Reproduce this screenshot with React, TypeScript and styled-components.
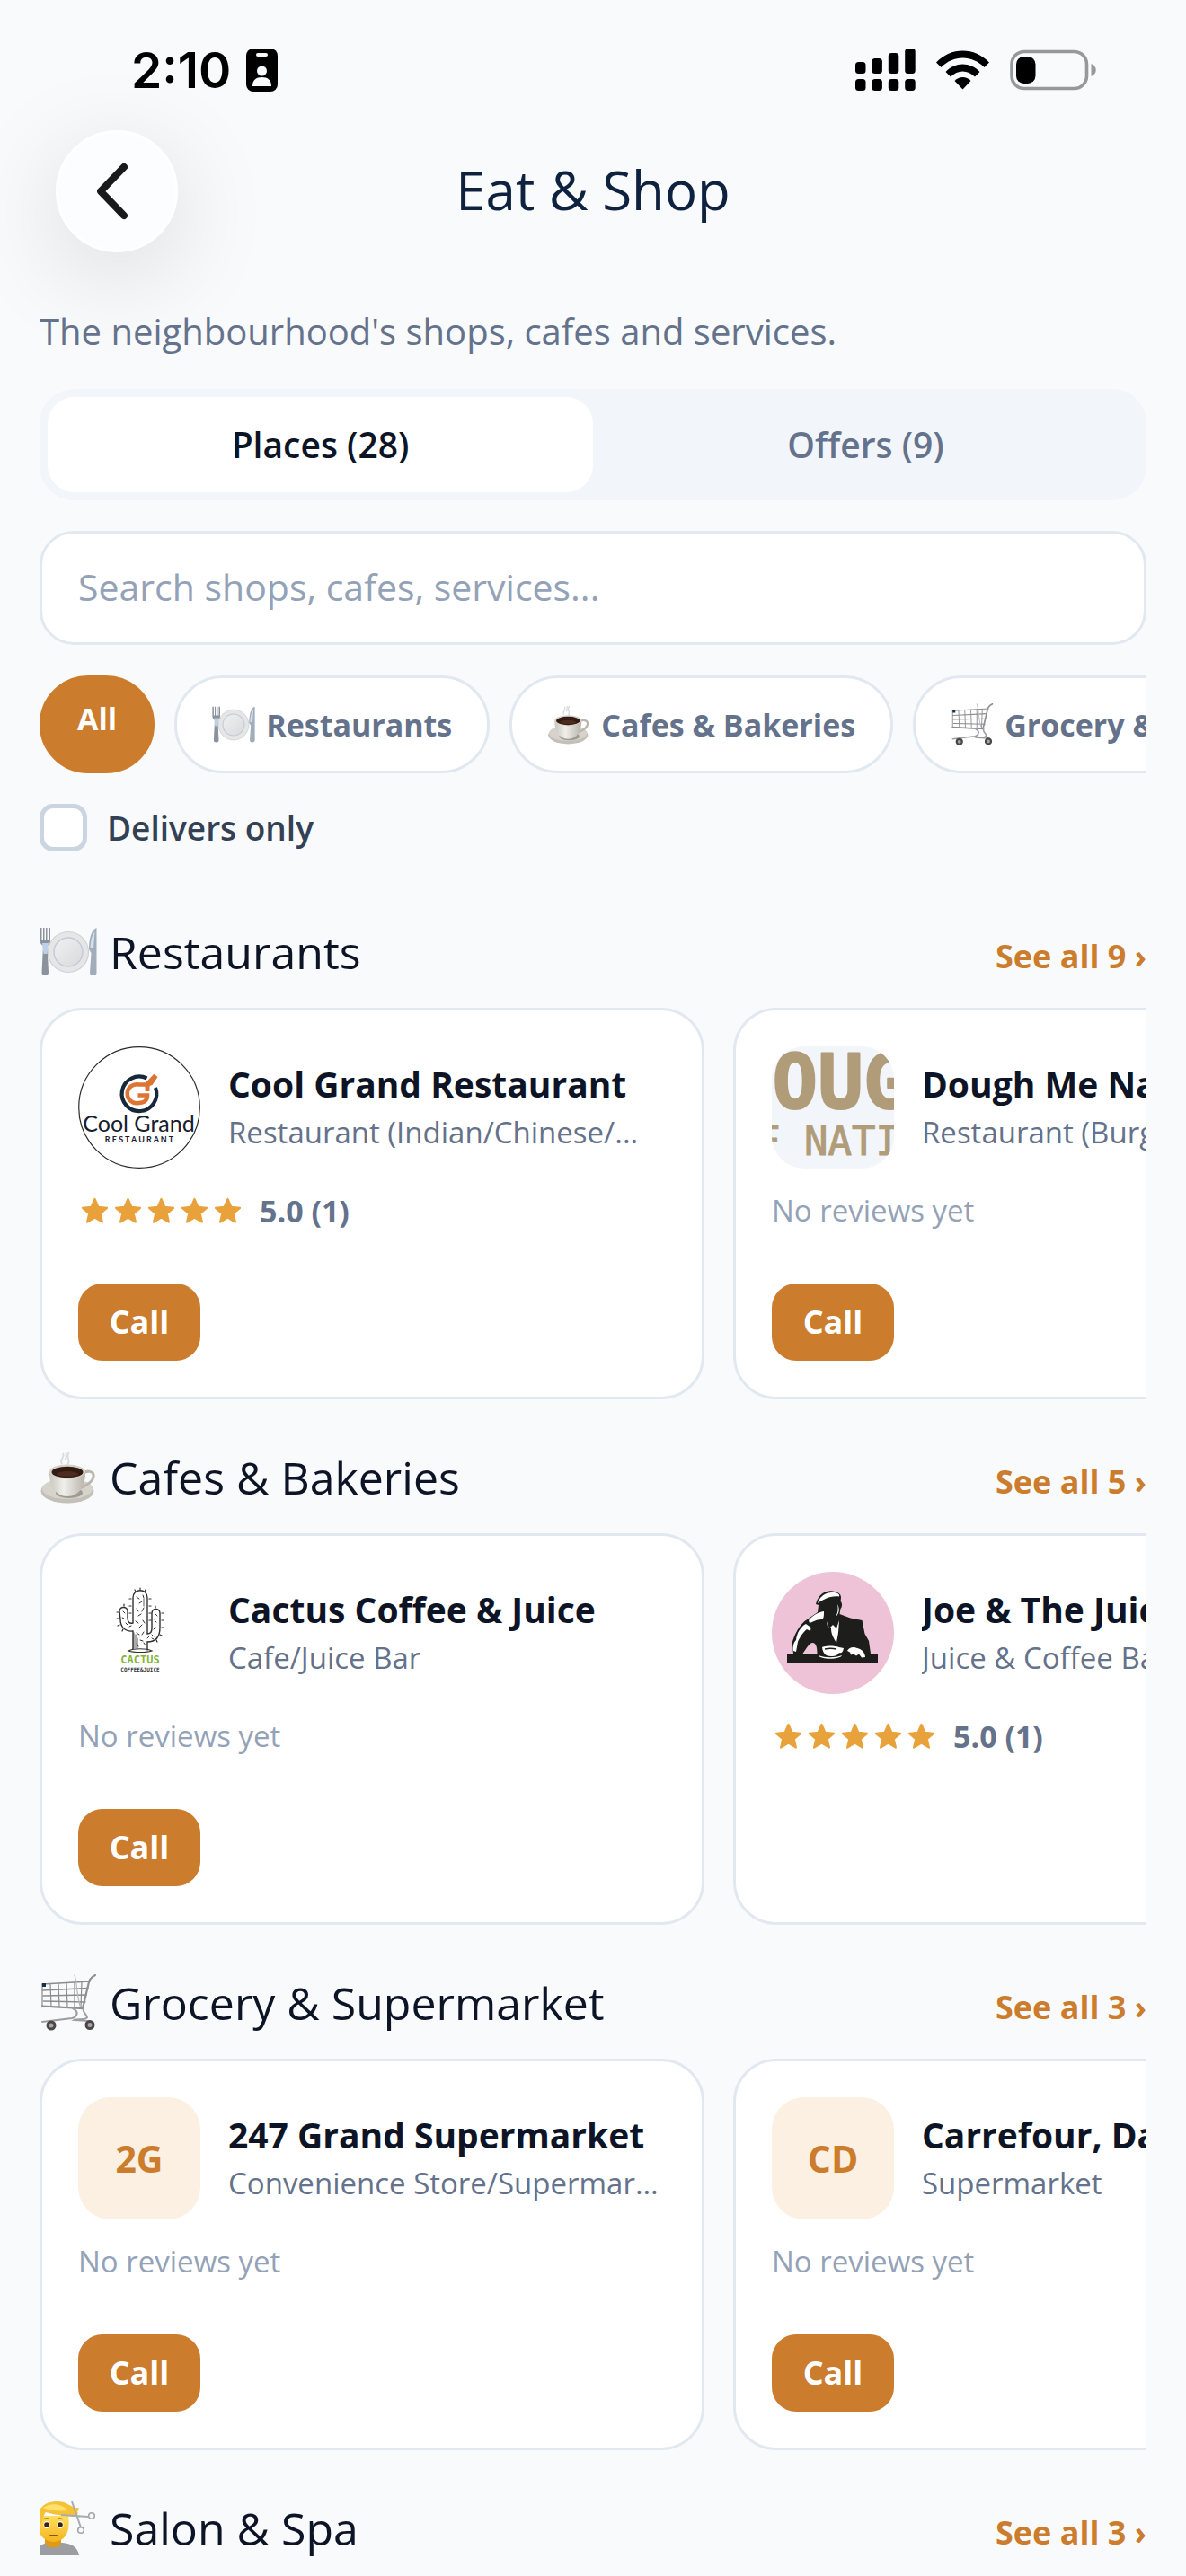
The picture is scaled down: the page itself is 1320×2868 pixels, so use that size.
import React, { useId, useState } from "react";
import styled, { createGlobalStyle } from "styled-components";

const color = {
  page: "#f9fafc",
  ink: "#0d1426",
  navy: "#0e2240",
  slate: "#64728b",
  muted: "#94a2b8",
  line: "#e2e8f0",
  track: "#f2f5fa",
  accent: "#cb7c2c",
  tint: "#fbf0e1",
  star: "#e9a23b",
  label: "#334155",
};

const GlobalStyle = createGlobalStyle`
  *, *::before, *::after { box-sizing: border-box; }
  body {
    margin: 0;
    background: ${color.page};
    font-family: "Open Sans", "Noto Sans", sans-serif;
    color: ${color.ink};
  }
  h1, h2, h3, p { margin: 0; }
  button, input { font-family: inherit; }
`;

const Screen = styled.div`
  height: 100vh;
  overflow: hidden;
  display: flex;
  flex-direction: column;
  background: ${color.page};
`;

const StatusBar = styled.div`
  flex: none;
  height: 145px;
  padding: 11px 100px 0 146px;
  display: flex;
  justify-content: space-between;
  align-items: center;
`;

const StatusGroup = styled.div<{ $gap: number }>`
  display: flex;
  align-items: center;
  gap: ${(p) => p.$gap}px;
`;

const Clock = styled.span`
  font-family: Inter, sans-serif;
  font-size: 55px;
  line-height: 64px;
  font-weight: 600;
  color: #000;
`;

const NavBar = styled.header`
  flex: none;
  display: grid;
  grid-template-columns: 136px 1fr 136px;
  align-items: center;
  padding: 0 62px;
`;

const BackButton = styled.button`
  width: 136px;
  height: 136px;
  padding: 0;
  border: 3px solid #fff;
  border-radius: 50%;
  background: #fcfdfe;
  box-shadow: 0 24px 110px rgba(0, 0, 0, 0.13);
  display: grid;
  place-items: center;
`;

const Title = styled.h1`
  padding-bottom: 5px;
  text-align: center;
  font-size: 60px;
  line-height: 80px;
  font-weight: 400;
  color: ${color.navy};
`;

const Content = styled.main`
  padding: 59px 44px 0;
  display: flex;
  flex-direction: column;
`;

const Intro = styled.p`
  font-size: 40px;
  line-height: 57px;
  color: ${color.slate};
`;

const Filters = styled.div`
  margin-top: 36px;
  display: flex;
  flex-direction: column;
  gap: 34px;
`;

const Tabs = styled.div`
  display: grid;
  grid-template-columns: 1fr 1fr;
  padding: 9px;
  border-radius: 38px;
  background: ${color.track};
`;

const Tab = styled.button<{ $active: boolean }>`
  height: 106px;
  border: 0;
  border-radius: 30px;
  background: ${(p) => (p.$active ? "#fff" : "transparent")};
  color: ${(p) => (p.$active ? color.ink : color.slate)};
  font-size: 39px;
  line-height: 54px;
  font-weight: 600;
`;

const Search = styled.input`
  width: 100%;
  height: 127px;
  padding: 0 40px 3px;
  border: 3px solid ${color.line};
  border-radius: 38px;
  background: #fff;
  font-size: 41px;
  color: ${color.ink};
  outline: none;
  &::placeholder {
    color: ${color.muted};
    opacity: 1;
  }
`;

const ChipRow = styled.div`
  display: flex;
  gap: 22px;
  overflow: hidden;
`;

const Chip = styled.button<{ $active: boolean }>`
  flex: none;
  height: 109px;
  padding: 20px 39px;
  border: 3px solid ${(p) => (p.$active ? color.accent : color.line)};
  border-radius: 54px;
  background: ${(p) => (p.$active ? color.accent : "#fff")};
  color: ${(p) => (p.$active ? "#fff" : color.slate)};
  display: flex;
  align-items: ${(p) => (p.$active ? "flex-start" : "center")};
  gap: 12px;
  font-size: 34px;
  line-height: 50px;
  font-weight: 700;
  white-space: nowrap;
`;

const CheckRow = styled.label`
  display: flex;
  align-items: center;
  gap: 22px;
  font-size: 37px;
  line-height: 53px;
  font-weight: 600;
  color: ${color.label};
`;

const Checkbox = styled.input`
  appearance: none;
  width: 53px;
  height: 53px;
  margin: 0;
  border: 5px solid #cbd5e1;
  border-radius: 15px;
  background: #fff;
  &:checked {
    background: ${color.accent};
    border-color: ${color.accent};
  }
`;

const Sections = styled.div`
  margin-top: 80px;
  display: flex;
  flex-direction: column;
  gap: 55px;
`;

const Section = styled.section`
  display: flex;
  flex-direction: column;
  gap: 30px;
`;

const SectionHead = styled.div`
  display: flex;
  justify-content: space-between;
  align-items: flex-end;
`;

const SectionTitle = styled.h2`
  display: flex;
  align-items: center;
  gap: 14px;
  font-size: 50px;
  line-height: 64px;
  font-weight: 400;
`;

const SeeAll = styled.a`
  color: ${color.accent};
  font-size: 36px;
  line-height: 54px;
  font-weight: 700;
  text-decoration: none;
`;

const CardRow = styled.div`
  display: flex;
  gap: 32px;
  overflow: hidden;
`;

const Card = styled.article`
  flex: none;
  width: 740px;
  padding: 40px;
  border: 3px solid ${color.line};
  border-radius: 48px;
  background: #fff;
  display: flex;
  flex-direction: column;
  align-items: flex-start;
`;

const CardTop = styled.div`
  width: 100%;
  display: flex;
  align-items: center;
  gap: 31px;
`;

const CardText = styled.div`
  min-width: 0;
  flex: 1;
  padding-bottom: 3px;
`;

const CardName = styled.h3`
  font-size: 39px;
  line-height: 57px;
  font-weight: 700;
  overflow: hidden;
  white-space: nowrap;
  text-overflow: ellipsis;
`;

const CardKind = styled.p`
  font-size: 33px;
  line-height: 51px;
  color: ${color.slate};
  overflow: hidden;
  white-space: nowrap;
  text-overflow: ellipsis;
`;

const Avatar = styled.div<{ $bg: string }>`
  flex: none;
  width: 136px;
  height: 136px;
  border-radius: 36px;
  overflow: hidden;
  background: ${(p) => p.$bg};
  color: ${color.accent};
  font-size: 41px;
  line-height: 57px;
  font-weight: 700;
  display: grid;
  place-items: center;
`;

const Review = styled.div<{ $rated: boolean }>`
  margin-top: 26px;
  height: 42px;
  display: flex;
  align-items: center;
  gap: ${(p) => (p.$rated ? 17 : 0)}px;
  font-size: ${(p) => (p.$rated ? 34 : 33)}px;
  line-height: 42px;
  font-weight: ${(p) => (p.$rated ? 700 : 400)};
  color: ${(p) => (p.$rated ? color.slate : color.muted)};
`;

const Stars = styled.span`
  display: flex;
`;

const CallButton = styled.button`
  margin-top: 60px;
  width: 136px;
  height: 86px;
  padding: 0;
  border: 0;
  border-radius: 27px;
  background: ${color.accent};
  color: #fff;
  font-size: 36px;
  line-height: 50px;
  font-weight: 700;
`;

/* ---------- status icons ---------- */

const BadgeIcon = () => (
  <svg width="35" height="48" viewBox="0 0 35 48" aria-hidden="true">
    <rect width="35" height="48" rx="8" fill="#000" />
    <rect x="11" y="5" width="13" height="4" rx="2" fill={color.page} />
    <circle cx="17.500" cy="25" r="5.500" fill={color.page} />
    <path d="M7 42c0-7 4-10 10.500-10S28 35 28 42z" fill={color.page} />
  </svg>
);

const SignalIcon = () => (
  <svg width="67" height="48" viewBox="0 0 67 48" aria-hidden="true">
    {[15, 11, 5, 0].map((top, i) => (
      <g key={i}>
        <rect x={i * 18.4} y={top} width="11.500" height={28 - top} rx="3.500" />
        <rect x={i * 18.4} y="34" width="11.500" height="13" rx="3.500" />
      </g>
    ))}
  </svg>
);

const WifiIcon = () => (
  <svg width="59" height="44" viewBox="0 0 59 44" aria-hidden="true">
    <path d="M0 13.500C16-4 43-4 59 13.500L53.500 19C40 5 19 5 5.500 19Z" />
    <path d="M10.500 24C21 12.500 38 12.500 48.500 24L43 29.500C35 21.500 24 21.500 16 29.500Z" />
    <path d="M20.500 34C25.500 28.500 33.500 28.500 38.500 34L29.500 43.500Z" />
  </svg>
);

const BatteryIcon = () => (
  <svg width="96" height="46" viewBox="0 0 96 46" aria-hidden="true">
    <rect x="2" y="2.500" width="83.500" height="41" rx="14" fill="none" stroke="#97989a" strokeWidth="3.600" />
    <rect x="7" y="8" width="21.500" height="30" rx="8.500" />
    <path d="M90.500 16c7 2.500 7 11.500 0 14z" fill="#97989a" />
  </svg>
);

const ChevronIcon = () => (
  <svg width="44" height="64" viewBox="0 0 44 64" aria-hidden="true">
    <path d="M30 5 4 32 30 59" fill="none" stroke="#1a1a1a" strokeWidth="8" strokeLinecap="round" strokeLinejoin="round" />
  </svg>
);

const StarIcon = () => (
  <svg width="37" height="30" viewBox="0 0 37 30" aria-hidden="true">
    <path
      d="M18.500 2 22.400 10.900 32 11.800 24.700 18.100 26.900 27.600 18.500 22.600 10.100 27.600 12.300 18.100 5 11.800 14.600 10.900Z"
      fill={color.star}
      stroke={color.star}
      strokeWidth="2.200"
      strokeLinejoin="round"
    />
  </svg>
);

/* ---------- category pictures ---------- */

type Category = "plate" | "coffee" | "cart" | "haircut";

const Plate = ({ id }: { id: string }) => (
  <>
    <defs>
      <linearGradient id={id} x1="0" y1="0" x2="1" y2="1">
        <stop offset="0" stopColor="#f0f1f3" />
        <stop offset="1" stopColor="#d9d9da" />
      </linearGradient>
    </defs>
    <circle cx="32" cy="32" r="22.500" fill="#e6e6e7" stroke="#cfd1d5" strokeWidth="1.200" />
    <circle cx="32" cy="32" r="16" fill={`url(#${id})`} stroke="#c0cad8" strokeWidth="1.400" />
    <path d="M.500 5v14c0 3 1.500 5 3.500 6L2.500 55c0 4 7.500 4 7.500 0L8.500 25c2-1 3.500-3 3.500-6V5H10v13H8.500V5H7v13H5.500V5H4v13H2.500V5Z" fill="#8b929c" />
    <path d="M3 22h7l-1.500 12h-4Z" fill="#bcd0e8" />
    <path d="M63.500 5c-6 2-8.500 13-8.500 24l2.500 4-1.500 22c0 4 7.500 4 7.500 0Z" fill="#a1adbb" />
    <path d="M61.500 9c-3 4-5 11-5 19h3.500Z" fill="#d3e0ee" />
  </>
);

const Coffee = ({ id }: { id: string }) => (
  <>
    <defs>
      <linearGradient id={id} x1="0" y1="0" x2="1" y2="0">
        <stop offset="0" stopColor="#c9c6bf" />
        <stop offset="0.400" stopColor="#f1efea" />
        <stop offset="1" stopColor="#b7b3ab" />
      </linearGradient>
    </defs>
    <ellipse cx="31" cy="47" rx="29.500" ry="13.500" fill="#c3c0b8" />
    <ellipse cx="31" cy="44.500" rx="28" ry="11.500" fill="#d6d3cc" />
    <ellipse cx="33" cy="49" rx="15" ry="6" fill="#9f9b92" />
    <path d="M47 28c6-5 14-3 13 3-1 7-8 9-15 13" fill="none" stroke="#bbb7ae" strokeWidth="3" />
    <path d="M11 26c0 14 6 27 20 27s20-13 20-27Z" fill={`url(#${id})`} />
    <ellipse cx="31" cy="25.500" rx="20" ry="8" fill="#d5d1c9" />
    <ellipse cx="31" cy="26" rx="17.500" ry="6.200" fill="#331b11" />
    <ellipse cx="31" cy="28" rx="12" ry="3" fill="#4c2c1e" />
    <path d="M25 17c-4-6 4-6 1-12M31 18c5-6-3-8 2-14M28 12c4-2 0-5 2-8" fill="none" stroke="#d9dbdd" strokeWidth="1.800" />
  </>
);

const Cart = () => (
  <g fill="none" strokeLinecap="round">
    <path d="M3 11 56 8M3.500 18 54 15.500M4 24 52 23M4.500 30 51 31M5 36 49 37.500" stroke="#8b8c8e" strokeWidth="1.500" />
    <path d="M3 11v25M12 11l1 25M21 10l1 26M30 10l1 26M39 9v28M47 9l-1 28" stroke="#8b8c8e" strokeWidth="1.200" />
    <path d="M39 1c3 9 2 20 6 34" stroke="#b6b7b9" strokeWidth="1.200" />
    <path d="M62 1c-6 3-7 6-8 12L48 38 3 35.500" stroke="#8e8f91" strokeWidth="2.200" />
    <path d="M37 38c8 4 4 10-1 11L3 53M49 38c-2 4 4 7 4 10-2 4-10 1-14 3L56 52" stroke="#9c9da0" strokeWidth="2" />
    <circle cx="13" cy="57" r="4" stroke="#4c4747" strokeWidth="3" fill="#a9a5a4" />
    <circle cx="56" cy="56.500" r="4" stroke="#4c4747" strokeWidth="3" fill="#a9a5a4" />
    <path d="M3 12h4" stroke="#17324c" strokeWidth="4" strokeLinecap="butt" />
  </g>
);

const Haircut = ({ id }: { id: string }) => (
  <>
    <defs>
      <linearGradient id={id} x1="0" y1="0" x2="0" y2="1">
        <stop offset="0" stopColor="#ffdf5e" />
        <stop offset="1" stopColor="#f3b51f" />
      </linearGradient>
    </defs>
    <path d="M0 62V52c5-4 9-4 15-4 16-1 27 2 29 14Z" fill="#9c9da0" />
    <path d="M6 42h18v7c-4 6-14 6-18 0Z" fill="#dd9a18" />
    <path d="M0 18h32c2 12 0 28-16 29C8 47 2 42 0 37Z" fill={`url(#${id})`} />
    <path d="M0 12C4 3 16 0 27 3c6 2 11 7 17 6l-2 5 1 1c-3 4-8 4-11 3-8 0-18-2-25-4-3 3-3 11-7 14Z" fill="#f5c235" />
    <path d="M4 9C12 3 24 4 32 12 22 13 10 12 4 9Z" fill="#ffe06e" />
    <ellipse cx="8" cy="28" rx="3.500" ry="4" fill="#fff" />
    <ellipse cx="23" cy="28" rx="3.500" ry="4" fill="#fff" />
    <circle cx="8" cy="28" r="2.800" fill="#3a2414" />
    <circle cx="23" cy="28" r="2.800" fill="#3a2414" />
    <path d="M12 40h7" fill="none" stroke="#8d4f13" strokeWidth="2" strokeLinecap="round" />
    <path d="M4 22q3-2 6-1M20 21q3-1 6 1" fill="none" stroke="#c58a1a" strokeWidth="1.400" />
    <path d="M24 17 54 19M36 2 46 31" stroke="#a9abb0" strokeWidth="2" />
    <circle cx="58" cy="18" r="3.300" fill="none" stroke="#a3a4a8" strokeWidth="1.600" />
    <circle cx="46" cy="34" r="3.300" fill="none" stroke="#a3a4a8" strokeWidth="1.600" />
  </>
);

const pictures = { plate: Plate, coffee: Coffee, cart: Cart, haircut: Haircut };

const CategoryIcon = ({ kind, size }: { kind: Category; size: number }) => {
  const id = useId();
  const Picture = pictures[kind];
  return (
    <svg width={size} height={size} viewBox="0 0 64 64" aria-hidden="true">
      <Picture id={id} />
    </svg>
  );
};

/* ---------- shop logos ---------- */

const CoolGrandLogo = () => (
  <svg width="136" height="136" viewBox="0 0 136 136" role="img" aria-label="Cool Grand logo">
    <circle cx="68" cy="68" r="67.300" fill="#fff" stroke="#2a2a2a" strokeWidth="1.200" />
    <path d="M76.500 35.500A19.300 19.300 0 1 0 86 46" fill="none" stroke="#16283a" strokeWidth="4.200" />
    <path d="M86.500 32.500 78 42.500H67.500a10.500 10.500 0 1 0 0 20.500c6 0 9.500-3 9.500-8.500H66.500" fill="none" stroke="#dd7433" strokeWidth="4.600" />
    <path d="M84 31l4.500 3-6 9-3 1v6h-5v-9Z" fill="#dd7433" />
    <text x="67.500" y="95" textAnchor="middle" fontFamily="Lato, sans-serif" fontWeight="400" fontSize="25" fill="#16202e">Cool Grand</text>
    <text x="68" y="107" textAnchor="middle" fontFamily="Lato, sans-serif" fontWeight="700" fontSize="9" fill="#16202e">R E S T A U R A N T</text>
  </svg>
);

const DoughLogo = () => (
  <svg width="136" height="136" viewBox="0 0 136 136" role="img" aria-label="Dough Me Nation logo">
    <g fill="#b09c79" stroke="#b09c79" strokeLinejoin="round" fontFamily="'DejaVu Sans Mono', monospace">
      <text x="-50" y="69" fontSize="84" fontWeight="700" strokeWidth="2">DOUG</text>
      <text x="-17" y="121" fontSize="44" fontWeight="400" strokeWidth="1">F NATI</text>
    </g>
  </svg>
);

const CactusLogo = () => (
  <svg width="136" height="136" viewBox="0 0 136 136" role="img" aria-label="Cactus Coffee and Juice logo">
    <g fill="none" stroke="#2f2f2f" strokeLinecap="round">
      <path
        d="M61 86V66c-9 1-14-5-14-13l-1-9c0-6 9-6 9 0v7c0 5 2 7 6 6V29c0-11 16-11 16 0v40c4 0 5-2 5-6V46c0-6 9-6 9 0v16c0 11-5 16-14 16v9"
        strokeWidth="1.400"
      />
      <path d="M56 88c6-3 20-3 26 0-6 2-20 2-26 0Z" strokeWidth="1.200" />
      <path
        d="M65 28l3 2M72 26l1 3M68 35l3-2M65 41l2 3M73 40l-2 4M67 49l3-2M64 55l3 2M72 54l2 3M68 62l3-3M65 68l3 2M73 67l-2 3M69 76l3 1M65 80l2 3M75 82l-2-3M50 44l2 2M49 51l2 1M53 57l2 2M57 61l2-1M86 47l2 2M85 54l2 2M86 62l-2 2M82 70l2 2M77 74l2-2M84 75l-2-1"
        strokeWidth="1"
      />
      <path
        d="M59 30h-2M59 38h-2M59 46h-2M79 30h2M79 38h2M79 46h2M79 54h2M64 22l-1-2M69 20v-2M74 22l1-2M45 45h-2M45 52h-2M46 59l-2 1M50 64l-1 2M93 46h2M93 54h2M93 62h2M91 70l2 1M87 76l1 2M86 40v-2M51 38v-2"
        strokeWidth="1.200"
      />
      <path d="M62 68v17M64 70v15M66 74v11M73 30v8" strokeWidth="0.800" />
    </g>
    <g textAnchor="middle" fontFamily="'DejaVu Sans Mono', monospace" fontWeight="700">
      <text x="69" y="102" fontSize="12" fill="#86b53a">CACTUS</text>
      <text x="69" y="111" fontSize="6" fill="#333">COFFEE&amp;JUICE</text>
    </g>
  </svg>
);

const JoeLogo = () => (
  <svg width="136" height="136" viewBox="0 0 136 136" role="img" aria-label="Joe and The Juice logo">
    <circle cx="68" cy="68" r="68" fill="#eec2d7" />
    <g fill="#1d1d1b">
      <path d="M49 36C51 27 58 20 68 21.500c6 1 9 3 9 7.500l-.500 4c2 1 2 6 0 8l-1 6 12 4.500 13 2.500 3 15 4.500 8 2 14H50.500c0-6-1-12-5-12-4 0-8 8-11 12H24l-1.500-12c3-9 7-18 14-24L51 45l1-8Z" />
      <path d="M17 91h101v11H17z" />
    </g>
    <g fill="#fff">
      <path d="M51 35c2-7 9-13 17-12 5 0 8 2 7 4.500-9-1-16 2-24 7.500Z" />
      <path d="M58 44c0 5 0 9-3 9-6 0-9 3-13 4l-1-3c4-5 10-9 17-10Z" />
      <path d="M38 58l5.500 4-.500 4-4-2c-4 3-8 9-10 14l-2 11-3-1c-1-4 0-9 3-12 1-8 5-15 11-18Z" />
      <path d="M61 55l3 8 4-4 4 4 3-9-1 14-2 11c-3-5-6-9-6-16l-4-2Z" />
      <path d="M73 36c1 5 1 9-2 14 4-3 5-9 2-14Z" />
      <path d="M56 84c4-2 14-2 19 0l5 1c-1 5-3 6-5 5-2 3-4 4-9 4-6 0-9-3-10-10Z" />
      <path d="M52 93c8 3 18 3 26 0-2 5-24 5-26 0Z" />
      <path d="M84 88c2-4 7-5 11-3 5 1 9 5 9 10l-4 .500-3-4-3 2-3-2-3 1-1-3Z" />
    </g>
    <path d="M59 86c4-1 9-1 13 0" fill="none" stroke="#1d1d1b" strokeWidth="1.500" />
  </svg>
);

/* ---------- data ---------- */

type Shop = {
  name: string;
  kind: string;
  rated?: boolean;
  call: boolean;
  bg: string;
  badge: React.ReactNode;
};

type Group = { icon: Category; title: string; count: number; shops: Shop[] };

const groups: Group[] = [
  {
    icon: "plate",
    title: "Restaurants",
    count: 9,
    shops: [
      { name: "Cool Grand Restaurant", kind: "Restaurant (Indian/Chinese/...", rated: true, call: true, bg: "#fff", badge: <CoolGrandLogo /> },
      { name: "Dough Me Nation", kind: "Restaurant (Burgers)", call: true, bg: color.track, badge: <DoughLogo /> },
    ],
  },
  {
    icon: "coffee",
    title: "Cafes & Bakeries",
    count: 5,
    shops: [
      { name: "Cactus Coffee & Juice", kind: "Cafe/Juice Bar", call: true, bg: "#fff", badge: <CactusLogo /> },
      { name: "Joe & The Juice", kind: "Juice & Coffee Bar", rated: true, call: false, bg: "#fff", badge: <JoeLogo /> },
    ],
  },
  {
    icon: "cart",
    title: "Grocery & Supermarket",
    count: 3,
    shops: [
      { name: "247 Grand Supermarket", kind: "Convenience Store/Supermarket", call: true, bg: color.tint, badge: "2G" },
      { name: "Carrefour, Damac", kind: "Supermarket", call: true, bg: color.tint, badge: "CD" },
    ],
  },
  { icon: "haircut", title: "Salon & Spa", count: 3, shops: [] },
];

const chips: { icon?: Category; label: string }[] = [
  { label: "All" },
  { icon: "plate", label: "Restaurants" },
  { icon: "coffee", label: "Cafes & Bakeries" },
  { icon: "cart", label: "Grocery & Supermarket" },
];

const ShopCard = ({ shop }: { shop: Shop }) => (
  <Card>
    <CardTop>
      <Avatar $bg={shop.bg}>{shop.badge}</Avatar>
      <CardText>
        <CardName>{shop.name}</CardName>
        <CardKind>{shop.kind}</CardKind>
      </CardText>
    </CardTop>
    <Review $rated={!!shop.rated}>
      {shop.rated ? (
        <>
          <Stars>
            {[0, 1, 2, 3, 4].map((n) => (
              <StarIcon key={n} />
            ))}
          </Stars>
          <span>5.0 (1)</span>
        </>
      ) : (
        "No reviews yet"
      )}
    </Review>
    {shop.call && <CallButton type="button">Call</CallButton>}
  </Card>
);

export default function App() {
  const [tab, setTab] = useState(0);
  const [query, setQuery] = useState("");
  const [chip, setChip] = useState("All");

  return (
    <Screen>
      <GlobalStyle />
      <StatusBar>
        <StatusGroup $gap={17}>
          <Clock>2:10</Clock>
          <BadgeIcon />
        </StatusGroup>
        <StatusGroup $gap={23}>
          <SignalIcon />
          <WifiIcon />
          <BatteryIcon />
        </StatusGroup>
      </StatusBar>
      <NavBar>
        <BackButton type="button" aria-label="Back">
          <ChevronIcon />
        </BackButton>
        <Title>Eat &amp; Shop</Title>
      </NavBar>
      <Content>
        <Intro>The neighbourhood's shops, cafes and services.</Intro>
        <Filters>
          <Tabs>
            {["Places (28)", "Offers (9)"].map((label, i) => (
              <Tab key={label} type="button" $active={tab === i} onClick={() => setTab(i)}>
                {label}
              </Tab>
            ))}
          </Tabs>
          <Search
            type="text"
            aria-label="Search shops, cafes, services"
            placeholder="Search shops, cafes, services..."
            value={query}
            onChange={(e) => setQuery(e.target.value)}
          />
          <ChipRow>
            {chips.map((c) => (
              <Chip key={c.label} type="button" $active={chip === c.label} onClick={() => setChip(c.label)}>
                {c.icon && <CategoryIcon kind={c.icon} size={48} />}
                {c.label}
              </Chip>
            ))}
          </ChipRow>
          <CheckRow>
            <Checkbox type="checkbox" />
            Delivers only
          </CheckRow>
        </Filters>
        <Sections>
          {groups.map((g) => (
            <Section key={g.title}>
              <SectionHead>
                <SectionTitle>
                  <CategoryIcon kind={g.icon} size={64} />
                  {g.title}
                </SectionTitle>
                <SeeAll href="#">See all {g.count} ›</SeeAll>
              </SectionHead>
              {g.shops.length > 0 && (
                <CardRow>
                  {g.shops.map((s) => (
                    <ShopCard key={s.name} shop={s} />
                  ))}
                </CardRow>
              )}
            </Section>
          ))}
        </Sections>
      </Content>
    </Screen>
  );
}
